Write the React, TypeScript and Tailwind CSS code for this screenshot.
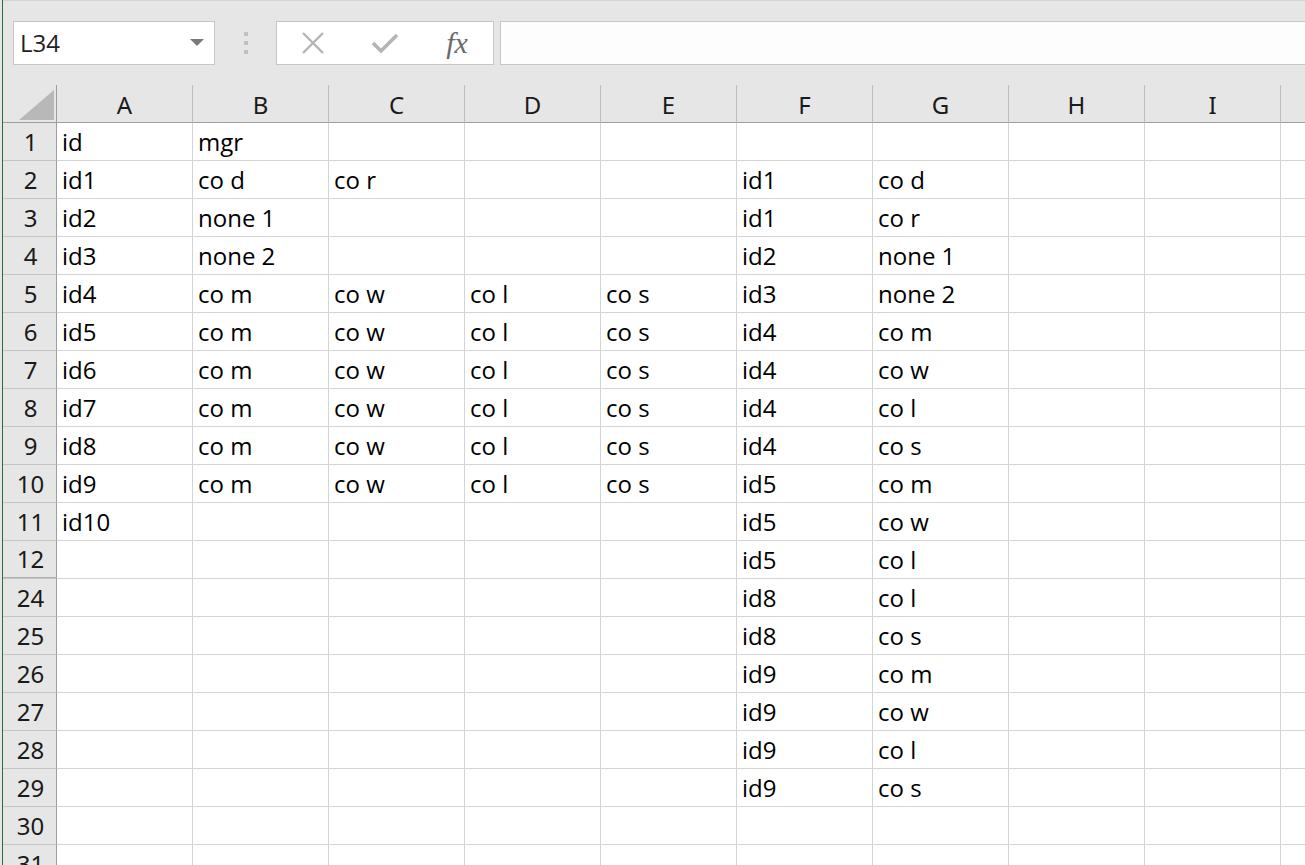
const COLS = ["A", "B", "C", "D", "E", "F", "G", "H", "I", ""];

type Row = { n: number; cells: string[] };

const ROWS: Row[] = [
  { n: 1, cells: ["id", "mgr"] },
  { n: 2, cells: ["id1", "co d", "co r", "", "", "id1", "co d"] },
  { n: 3, cells: ["id2", "none 1", "", "", "", "id1", "co r"] },
  { n: 4, cells: ["id3", "none 2", "", "", "", "id2", "none 1"] },
  { n: 5, cells: ["id4", "co m", "co w", "co l", "co s", "id3", "none 2"] },
  { n: 6, cells: ["id5", "co m", "co w", "co l", "co s", "id4", "co m"] },
  { n: 7, cells: ["id6", "co m", "co w", "co l", "co s", "id4", "co w"] },
  { n: 8, cells: ["id7", "co m", "co w", "co l", "co s", "id4", "co l"] },
  { n: 9, cells: ["id8", "co m", "co w", "co l", "co s", "id4", "co s"] },
  { n: 10, cells: ["id9", "co m", "co w", "co l", "co s", "id5", "co m"] },
  { n: 11, cells: ["id10", "", "", "", "", "id5", "co w"] },
  { n: 12, cells: ["", "", "", "", "", "id5", "co l"] },
  { n: 24, cells: ["", "", "", "", "", "id8", "co l"] },
  { n: 25, cells: ["", "", "", "", "", "id8", "co s"] },
  { n: 26, cells: ["", "", "", "", "", "id9", "co m"] },
  { n: 27, cells: ["", "", "", "", "", "id9", "co w"] },
  { n: 28, cells: ["", "", "", "", "", "id9", "co l"] },
  { n: 29, cells: ["", "", "", "", "", "id9", "co s"] },
  { n: 30, cells: [] },
  { n: 31, cells: [] },
];

const cellFont = "font-['Open_Sans',sans-serif] text-[24px] text-black";
const headFont = "font-['Noto_Sans',sans-serif] text-[24px] text-[#1a1a1a]";

function FormulaBar() {
  return (
    <div className="h-[85px] shrink-0 flex items-start pt-[20px] border-t border-[#d4d4d4]">
      <div className="ml-[10px] w-[202px] h-[44px] bg-white border border-[#c6c6c6] flex items-center pl-[6px] pr-[10px]">
        <span className="font-['Open_Sans',sans-serif] text-[24px] flex-1 text-[#222]">L34</span>
        <svg width="14" height="8" viewBox="0 0 14 8">
          <path d="M0 0 L14 0 L7 7 Z" fill="#7a7a7a" />
        </svg>
      </div>
      <div className="w-[61px] h-[44px] flex flex-col items-center justify-center gap-[5px]">
        <div className="w-[4px] h-[4px] bg-[#c0c0c0]" />
        <div className="w-[4px] h-[4px] bg-[#c0c0c0]" />
        <div className="w-[4px] h-[4px] bg-[#c0c0c0]" />
      </div>
      <div className="w-[218px] h-[44px] bg-white border border-[#c6c6c6] flex items-center">
        <div className="w-[72px] flex justify-center">
          <svg width="24" height="24" viewBox="0 0 24 24">
            <path d="M2 2 L22 22 M22 2 L2 22" stroke="#b4b4b4" strokeWidth="2.4" />
          </svg>
        </div>
        <div className="w-[72px] flex justify-center">
          <svg width="28" height="22" viewBox="0 0 28 22">
            <path d="M2 11 L10 19 L26 3" stroke="#b4b4b4" strokeWidth="3.6" fill="none" />
          </svg>
        </div>
        <div className="w-[72px] flex justify-center">
          <span className="font-['Liberation_Serif',serif] italic text-[30px] leading-none text-[#6a6a6a]">fx</span>
        </div>
      </div>
      <div className="ml-[6px] flex-1 h-[44px] bg-[#fdfdfd] border border-[#c6c6c6] border-r-0" />
    </div>
  );
}

function Sheet() {
  return (
    <div className="shrink-0 grid grid-cols-[54px_repeat(10,136px)] bg-white">
      {/* corner */}
      <div className="h-[38px] bg-[#e6e6e6] border-r border-b border-[#9e9e9e] flex items-end justify-end pr-[2px] pb-[2px]">
        <svg width="35" height="30" viewBox="0 0 35 30">
          <path d="M35 0 L35 30 L0 30 Z" fill="#b8b8b8" />
        </svg>
      </div>
      {COLS.map((c, i) => (
        <div
          key={i}
          className={`h-[38px] bg-[#e6e6e6] border-r border-[#bdbdbd] border-b-[#9e9e9e] border-b flex items-center justify-center pt-[2px] ${headFont}`}
        >
          {c}
        </div>
      ))}
      {ROWS.map((r) => (
        <Line key={r.n} row={r} />
      ))}
    </div>
  );
}

function Line({ row }: { row: Row }) {
  return (
    <>
      <div
        className={`h-[38px] bg-[#e6e6e6] border-r border-r-[#9e9e9e] border-b border-b-[#c4c4c4] flex flex-col ${headFont}`}
      >
        <div className="flex-1 flex items-center justify-center pl-[2px]">{row.n}</div>
        {row.n === 12 && <div className="h-[2px] border-b border-[#b0b0b0]" />}
      </div>
      {COLS.map((_, i) => (
        <div
          key={i}
          className={`h-[38px] border-r border-b border-[#d4d4d4] flex items-center pl-[5px] whitespace-nowrap overflow-hidden ${cellFont}`}
        >
          {row.cells[i] ?? ""}
        </div>
      ))}
    </>
  );
}

export default function App() {
  return (
    <div className="w-[1305px] h-[865px] overflow-hidden bg-[#e6e6e6] flex">
      <div className="w-[2px] shrink-0 bg-[#e6e6e6]" />
      <div className="w-px shrink-0 bg-[#217346]" />
      <div className="flex-1 flex flex-col min-w-0">
        <FormulaBar />
        <Sheet />
      </div>
    </div>
  );
}
